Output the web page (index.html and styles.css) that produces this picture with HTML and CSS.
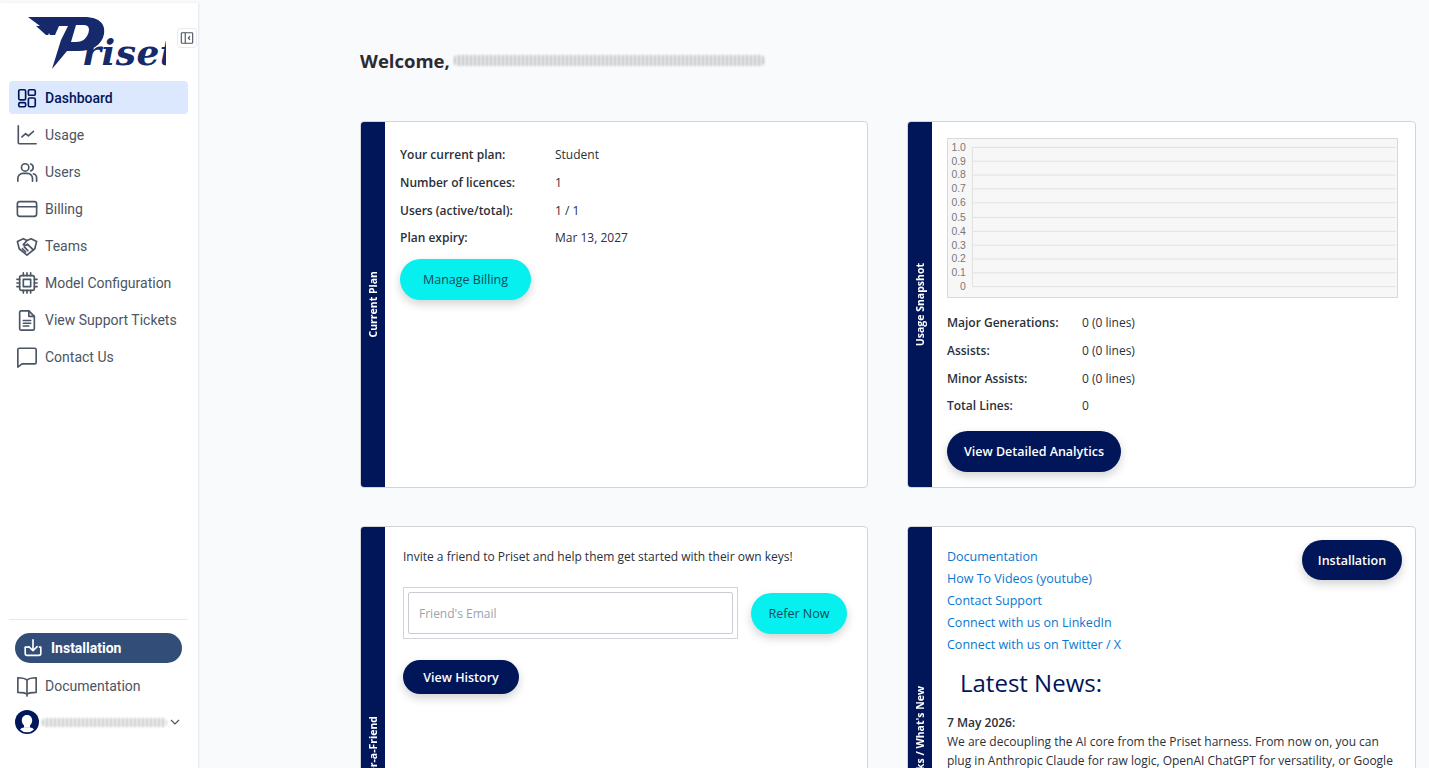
FILE: index.html
```html
<!DOCTYPE html>
<html lang="en">
<head>
<meta charset="utf-8">
<title>Priset Dashboard</title>
<link rel="stylesheet" href="styles.css">
</head>
<body>
<div class="app">
  <aside class="sidebar">
    <div class="brand">
      <svg class="logo" viewBox="0 0 140 66" width="140" height="66" aria-label="Priset">
        <path class="logo-ink" d="M2 5 H58 C72 5 80 11 78 22 C76 33 66 39 52 39 H41 L26 57 L35 28 L42 14 H14 Z"/>
        <path class="logo-ink" d="M10 14 H33 L29 23 H20 Z"/>
        <path class="logo-star" d="M23 21 l1.6 3.4 3.7 .4 -2.8 2.4 .8 3.6 -3.3 -1.9 -3.2 1.9 .8 -3.6 -2.8 -2.4 3.7 -.4z"/>
        <path class="logo-hole" d="M50 13 H58 C63 13 64 17 62 22 C60 27 56 30 50 30 H45 Z"/>
        <text class="logo-text" x="56" y="53">riset</text>
      </svg>
      <button class="collapse" type="button" aria-label="Collapse sidebar">
        <svg viewBox="0 0 16 16" width="14" height="14"><rect x="1.5" y="2" width="13" height="12" rx="1"/><path d="M6 2v12M11.5 6 9.5 8l2 2"/></svg>
      </button>
    </div>
    <nav class="nav">
      <a class="nav-item active">
        <svg class="ico" viewBox="0 0 24 24"><rect x="3" y="3" width="7.5" height="11" rx="1.5"/><rect x="13.5" y="3" width="7.5" height="6" rx="1.5"/><rect x="3" y="17" width="7.5" height="4.5" rx="1.5"/><rect x="13.5" y="12" width="7.5" height="9.5" rx="1.5"/></svg>
        <span>Dashboard</span>
      </a>
      <a class="nav-item">
        <svg class="ico" viewBox="0 0 24 24"><path d="M2.5 2v18.5a1 1 0 0 0 1 1H22"/><path d="M6.5 14l4-3.5 3 2.5 5.5-5"/></svg>
        <span>Usage</span>
      </a>
      <a class="nav-item">
        <svg class="ico" viewBox="0 0 24 24"><circle cx="10" cy="7" r="4"/><path d="M2 22v-3a5.500 5.500 0 0 1 5.500-5.500h5A5.500 5.500 0 0 1 18 19v3"/><path d="M16 3.200a4 4 0 0 1 0 7.600M19 14a5 5 0 0 1 3.500 5v3"/></svg>
        <span>Users</span>
      </a>
      <a class="nav-item">
        <svg class="ico" viewBox="0 0 24 24"><rect x="1.500" y="4" width="21" height="16" rx="2.500"/><path d="M1.500 9.500h21"/></svg>
        <span>Billing</span>
      </a>
      <a class="nav-item">
        <svg class="ico" viewBox="0 0 24 24"><path d="M8 4 12 6l4.500-2L22.500 7l-2 8-8.500 7-8.500-7-2-8z"/><path d="M12 6 8 10.500c1.500 1.500 3 1 4.500-.5l6 6M9 13l4 4M7 15l3.500 3.500"/></svg>
        <span>Teams</span>
      </a>
      <a class="nav-item">
        <svg class="ico" viewBox="0 0 24 24"><rect x="4" y="4" width="16" height="16" rx="2"/><rect x="8" y="8" width="8" height="8"/><path d="M8 1v3M12 1v3M16 1v3M8 20v3M12 20v3M16 20v3M1 8h3M1 12h3M1 16h3M20 8h3M20 12h3M20 16h3"/></svg>
        <span>Model Configuration</span>
      </a>
      <a class="nav-item">
        <svg class="ico" viewBox="0 0 24 24"><path d="M4 3.500A1.500 1.500 0 0 1 5.500 2H14l6 6v13.500a1.500 1.500 0 0 1-1.500 1.500h-13A1.500 1.500 0 0 1 4 21.500z"/><path d="M14 2v6h6M8 12.500h8M8 15.500h8M8 18.500h6"/></svg>
        <span>View Support Tickets</span>
      </a>
      <a class="nav-item">
        <svg class="ico" viewBox="0 0 24 24"><path d="M2 4a1.500 1.500 0 0 1 1.500-1.500h17A1.500 1.500 0 0 1 22 4v14a1.500 1.500 0 0 1-1.500 1.500H6.500L2 23z"/></svg>
        <span>Contact Us</span>
      </a>
    </nav>
    <div class="side-foot">
      <a class="install-pill">
        <svg class="ico" viewBox="0 0 24 24"><path d="M7 11H3.500v7a2 2 0 0 0 2 2h13a2 2 0 0 0 2-2v-7H19"/><path d="M12 3v12M7.500 10.500 12 15l4.500-4.500"/></svg>
        <span>Installation</span>
      </a>
      <a class="nav-item">
        <svg class="ico" viewBox="0 0 24 24"><path d="M12 5.500C10 3.500 6 3 2 3v16c4 0 8 0 10 2 2-2 6-2 10-2V3c-4 0-8 .5-10 2.500zM12 5.500V23"/></svg>
        <span>Documentation</span>
      </a>
      <div class="user">
        <svg class="avatar" viewBox="0 0 24 24"><circle cx="12" cy="12" r="12"/><path class="avatar-mark" d="M12 5c-3.500 0-5.200 2.600-5.200 5.600 0 2.200 1 3.800 2.200 4.700v2.400H15v-2.400c1.200-.9 2.200-2.500 2.200-4.700C17.200 7.600 15.500 5 12 5z"/><path class="avatar-mark" d="M5 19.500c1-1.300 2.400-1.800 4-2h6c1.600.2 3 .7 4 2a10 10 0 0 1-14 0z"/></svg>
        <span class="smudge smudge-user"></span>
        <svg class="chev" viewBox="0 0 10 6" width="10" height="6"><path d="M1 1l4 4 4-4"/></svg>
      </div>
    </div>
  </aside>

  <main class="main">
    <h1 class="welcome"><span>Welcome,</span><span class="smudge smudge-name"></span></h1>
    <div class="cards">
      <section class="card card-top">
        <div class="rail"><span>Current Plan</span></div>
        <div class="body plan-body">
          <dl class="facts plan-facts">
            <dt>Your current plan:</dt><dd>Student</dd>
            <dt>Number of licences:</dt><dd>1</dd>
            <dt>Users (active/total):</dt><dd>1 / 1</dd>
            <dt>Plan expiry:</dt><dd>Mar 13, 2027</dd>
          </dl>
          <button class="btn btn-cyan btn-billing" type="button">Manage Billing</button>
        </div>
      </section>

      <section class="card card-top">
        <div class="rail"><span>Usage Snapshot</span></div>
        <div class="body usage-body">
          <svg class="chart" viewBox="0 0 451 160" preserveAspectRatio="none">
            <g class="grid">
              <path d="M25 8.500H450M25 22.500H450M25 36.500H450M25 50.500H450M25 64.500H450M25 79.500H450M25 93.500H450M25 107.500H450M25 121.500H450M25 135.500H450M25 149.500H450M24.500 8V150"/>
            </g>
            <g class="ticks">
              <text x="18" y="12">1.0</text><text x="18" y="26">0.9</text><text x="18" y="40">0.8</text>
              <text x="18" y="54">0.7</text><text x="18" y="68">0.6</text><text x="18" y="83">0.5</text>
              <text x="18" y="97">0.4</text><text x="18" y="111">0.3</text><text x="18" y="125">0.2</text>
              <text x="18" y="139">0.1</text><text x="18" y="153">0</text>
            </g>
          </svg>
          <dl class="facts usage-facts">
            <dt>Major Generations:</dt><dd>0 (0 lines)</dd>
            <dt>Assists:</dt><dd>0 (0 lines)</dd>
            <dt>Minor Assists:</dt><dd>0 (0 lines)</dd>
            <dt>Total Lines:</dt><dd>0</dd>
          </dl>
          <button class="btn btn-navy btn-analytics" type="button">View Detailed Analytics</button>
        </div>
      </section>

      <section class="card card-bottom">
        <div class="rail"><span>Refer-a-Friend</span></div>
        <div class="body refer-body">
          <p class="invite">Invite a friend to Priset and help them get started with their own keys!</p>
          <div class="refer-row">
            <div class="input-wrap"><input class="email" type="text" placeholder="Friend's Email"></div>
            <button class="btn btn-cyan btn-refer" type="button">Refer Now</button>
          </div>
          <button class="btn btn-navy btn-history" type="button">View History</button>
        </div>
      </section>

      <section class="card card-bottom">
        <div class="rail"><span>Quick Links / What's New</span></div>
        <div class="body links-body">
          <button class="btn btn-navy btn-install" type="button">Installation</button>
          <ul class="links">
            <li><a>Documentation</a></li>
            <li><a>How To Videos (youtube)</a></li>
            <li><a>Contact Support</a></li>
            <li><a>Connect with us on LinkedIn</a></li>
            <li><a>Connect with us on Twitter / X</a></li>
          </ul>
          <h2 class="news-title">Latest News:</h2>
          <p class="news"><strong>7 May 2026:</strong><br>We are decoupling the AI core from the Priset harness. From now on, you can plug in Anthropic Claude for raw logic, OpenAI ChatGPT for versatility, or Google Gemini for deep context.</p>
        </div>
      </section>
    </div>
  </main>
</div>
</body>
</html>
```

FILE: styles.css
```css
* { box-sizing: border-box; }
html, body { margin: 0; height: 100%; overflow: hidden; }
body { background: #f9fafb; font-family: "Open Sans", "Noto Sans", sans-serif; color: #2a2f3a; }
.app { display: flex; height: 100vh; }

/* Sidebar */
.sidebar {
  width: 198px; flex: none; margin-top: 3px; background: #fff;
  box-shadow: 1px 0 2px rgba(0,0,0,.08);
  display: flex; flex-direction: column; padding: 0 10px 0 9px;
  font-family: Roboto, "Liberation Sans", sans-serif;
}
.brand { position: relative; height: 78px; }
.logo { position: absolute; left: 17px; top: 9px; }
.logo-ink { fill: #16296b; }
.logo-hole { fill: #fff; }
.logo-star { fill: #fff; }
.logo-text { font: italic 700 36px "DejaVu Serif", serif; fill: #16296b; letter-spacing: .5px; }
.collapse {
  position: absolute; left: 168px; top: 25px; width: 20px; height: 20px; padding: 0;
  display: flex; align-items: center; justify-content: center;
  background: #fff; border: 1px solid #e8eaee; border-radius: 3px;
}
.collapse svg { fill: none; stroke: #4b5563; stroke-width: 1.3; }
.nav { display: flex; flex-direction: column; gap: 4px; }
.nav-item {
  display: flex; align-items: center; gap: 7px; height: 33px; padding: 0 7px;
  color: #4b5563; font-size: 14px; border-radius: 4px; white-space: nowrap;
}
.nav-item.active { background: #dbe8fd; color: #00175a; font-weight: 500; }
.ico { width: 22px; height: 22px; flex: none; fill: none; stroke: currentColor; stroke-width: 1.8; stroke-linecap: round; stroke-linejoin: round; }
.side-foot { margin-top: auto; border-top: 1px solid #e5e7eb; padding: 13px 0 34px; display: flex; flex-direction: column; }
.install-pill {
  display: flex; align-items: center; gap: 7px; height: 30px; margin: 0 6px; padding: 0 8px 0 7px;
  background: #324d78; color: #fff; font-size: 14px; font-weight: 700; border-radius: 15px;
}
.side-foot .nav-item { margin-top: 6px; }
.user { display: flex; align-items: center; margin: 8px 0 0 6px; height: 24px; position: relative; }
.avatar { width: 24px; height: 24px; flex: none; fill: #00175a; }
.avatar-mark { fill: #fff; }
.chev { position: absolute; left: 155px; top: 9px; fill: none; stroke: #4b5563; stroke-width: 1.2; }
.smudge {
  display: block; flex: none;
  background: repeating-linear-gradient(90deg, rgba(90,90,90,.55) 0 2px, rgba(255,255,255,.2) 2px 4px);
  filter: blur(1.2px); border-radius: 4px;
}
.smudge-user { width: 125px; height: 9px; margin-left: 3px; opacity: .7; }
.smudge-name { width: 310px; height: 11px; margin-left: 4px; opacity: .75; }

/* Main */
.main { flex: 1; min-width: 0; padding: 0 13px 0 162px; }
.welcome { display: flex; align-items: center; height: 121px; margin: 0; padding-bottom: 0; font-size: 18.500px; font-weight: 700; color: #2b2b33; }
.welcome { height: 121px; }
.welcome span:first-child { position: relative; top: 0; }
.cards { display: grid; grid-template-columns: 508px 509px; column-gap: 39px; row-gap: 38px; }
.card { display: flex; background: #fff; border: 1px solid #d1d5db; border-radius: 4px; overflow: hidden; }
.card-top { height: 367px; }
.card-bottom { height: 454px; }
.rail {
  width: 24px; flex: none; background: #001659; color: #fff; display: flex; align-items: center; justify-content: center;
  font-size: 10.500px; font-weight: 700; white-space: nowrap;
}
.rail span { writing-mode: vertical-rl; transform: rotate(180deg); }
.body { flex: 1; min-width: 0; }
.facts { display: grid; margin: 0; font-size: 12px; row-gap: 0; align-items: center; }
.facts dt { font-weight: 600; color: #2a2f3a; }
.facts dd { margin: 0; }
.plan-body { padding: 19px 15px 0 15px; }
.plan-facts { grid-template-columns: 155px 1fr; grid-auto-rows: 27.700px; }
.btn {
  display: block; border: 0; border-radius: 21px; font-family: inherit; font-size: 12.500px;
  box-shadow: 0 4px 10px rgba(0,0,0,.18);
}
.btn-cyan { background: #06f0ef; color: #0d4a5a; font-weight: 500; }
.btn-navy { background: #001659; color: #fff; font-weight: 600; }
.btn-billing { width: 131px; height: 41px; margin-top: 7px; }
.usage-body { padding: 16px 16px 0 15px; }
.chart { display: block; width: 451px; height: 160px; background: #f7f7f7; border: 1px solid #d9d9d9; }
.grid path { fill: none; stroke: #e2e2e2; stroke-width: 1; }
.ticks text { font: 10.500px "Liberation Sans", sans-serif; fill: #777; text-anchor: end; }
.usage-facts { grid-template-columns: 135px 1fr; grid-auto-rows: 27.700px; margin-top: 11px; }
.btn-analytics { width: 174px; height: 41px; margin-top: 11px; }
.refer-body { padding: 20px 20px 0 18px; }
.invite { margin: 0; font-size: 12px; line-height: 20px; }
.refer-row { display: flex; align-items: center; gap: 13px; margin-top: 20px; }
.input-wrap { width: 335px; height: 52px; border: 1px solid #d1d5db; padding: 4px; background: #fff; }
.email { display: block; width: 100%; height: 42px; border: 1px solid #c9ccd2; border-radius: 2px; padding: 0 10px; font: 12px "Open Sans", sans-serif; outline: 0; }
.email::placeholder { color: #9ca3af; }
.btn-refer { width: 96px; height: 41px; }
.btn-history { width: 116px; height: 34px; margin-top: 21px; }
.links-body { padding: 13px 13px 0 15px; position: relative; }
.links { list-style: none; margin: 0; padding: 6px 0 0; font-size: 12.500px; line-height: 22px; color: #0878cf; font-weight: 500; }
.btn-install { position: absolute; right: 13px; top: 13px; width: 100px; height: 40px; }
.news-title { margin: 8px 0 0 13px; font-size: 24px; line-height: 38px; font-weight: 500; color: #00155a; }
.news { margin: 11px 0 0; font-size: 12px; line-height: 19px; }
.news strong { font-weight: 600; }
```
